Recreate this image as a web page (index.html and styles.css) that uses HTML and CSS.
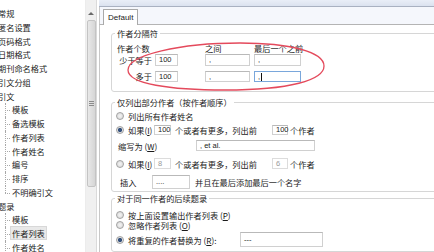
FILE: index.html
```html
<!DOCTYPE html>
<html>
<head>
<meta charset="utf-8">
<meta name="viewport" content="width=device-width">
<link rel="stylesheet" href="styles.css">
</head>
<body>

<div class="app">
  <div class="tree">
    <div class="node top">常规</div>
    <div class="node top">匿名设置</div>
    <div class="node top">页码格式</div>
    <div class="node top">日期格式</div>
    <div class="node top">期刊命名格式</div>
    <div class="node top">引文分组</div>
    <div class="node top">引文</div>
    <div class="node child"><span class="label">模板</span></div>
    <div class="node child"><span class="label">备选模板</span></div>
    <div class="node child"><span class="label">作者列表</span></div>
    <div class="node child"><span class="label">作者姓名</span></div>
    <div class="node child"><span class="label">编号</span></div>
    <div class="node child"><span class="label">排序</span></div>
    <div class="node child last"><span class="label">不明确引文</span></div>
    <div class="node top">题录</div>
    <div class="node child"><span class="label">模板</span></div>
    <div class="node child selected"><span class="label">作者列表</span></div>
    <div class="node child"><span class="label">作者姓名</span></div>
  </div>

  <div class="scrollbar">
    <div class="arrow"></div>
    <div class="thumb"><span class="grip"></span></div>
  </div>
  <div class="spacer"></div>

  <div class="main">
    <div class="strip"></div>
    <div class="tabbar"><div class="tab">Default</div></div>

    <div class="panel">
      <!-- author separators -->
      <fieldset class="group g1">
        <legend>作者分隔符</legend>
        <div class="sepgrid">
          <div class="head span2">作者个数</div>
          <div class="head">之间</div>
          <div class="head">最后一个之前</div>

          <div class="lbl">少于等于</div>
          <div><span class="field w23">100</span></div>
          <div><span class="field w45">,</span></div>
          <div><span class="field w47">,</span></div>

          <div class="lbl low">多于</div>
          <div class="low"><span class="field w23">100</span></div>
          <div class="low"><span class="field w45">,</span></div>
          <div class="low"><span class="field w47 focus">,<span class="caret"></span></span></div>
        </div>
      </fieldset>

      <!-- abbreviated author list -->
      <fieldset class="group g2">
        <legend>仅列出部分作者（按作者顺序）</legend>
        <div class="row r1">
          <span class="opt"><span class="radio"></span>列出所有作者姓名</span>
        </div>
        <div class="row r2">
          <span class="opt w38"><span class="radio on"></span>如果(<u>I</u>)</span>
          <span class="field w17">100</span>
          <span class="txt">个或者有更多，列出前</span>
          <span class="field w16">100</span>
          <span class="tail">个作者</span>
        </div>
        <div class="row r3">
          <span class="abbr">缩写为 (<u>W</u>)</span>
          <span class="field w119">, et al.</span>
        </div>
        <div class="row r4">
          <span class="opt w38"><span class="radio"></span>如果(<u>I</u>)</span>
          <span class="field w17 off">8</span>
          <span class="txt">个或者有更多，列出前</span>
          <span class="field w16 off">6</span>
          <span class="tail">个作者</span>
        </div>
        <div class="row r5">
          <span class="insert">插入</span>
          <span class="field w38f">....</span>
          <span class="after">并且在最后添加最后一个名字</span>
        </div>
      </fieldset>

      <!-- repeated authors -->
      <fieldset class="group g3">
        <legend>对于同一作者的后续题录</legend>
        <div class="row s1">
          <span class="opt"><span class="radio"></span>按上面设置输出作者列表 (<u>P</u>)</span>
        </div>
        <div class="row s2">
          <span class="opt"><span class="radio"></span>忽略作者列表 (<u>O</u>)</span>
        </div>
        <div class="row s3">
          <span class="opt w124"><span class="radio on"></span>将重复的作者替换为 (<u>R</u>):</span>
          <span class="field w83">---</span>
        </div>
      </fieldset>
    </div>
  </div>
</div>

<svg class="mark" width="434" height="252" viewBox="0 0 434 252">
  <path d="M128,70 C128,55 180,43 240,43 C290,43 324,52 324,66 C324,80 290,90 225,90 C170,90 128,84 128,70 Z"
        fill="none" stroke="#e44a5c" stroke-width="1.3"/>
</svg>

</body>
</html>
```

FILE: styles.css
```css
* {
  box-sizing: border-box;
}

html, body {
  margin: 0;
}

body {
  position: relative;
  width: 434px;
  height: 252px;
  overflow: hidden;
  font-family: "Noto Sans CJK SC", "Noto Sans", sans-serif;
  font-size: 8.2px;
  color: #1b1b1b;
  background: #fff;
}

.app {
  display: flex;
  height: 252px;
}

/* left tree */
.tree {
  flex: none;
  width: 85px;
  padding-top: 7px;
  overflow: hidden;
}

.node {
  position: relative;
  height: 13.76px;
  line-height: 13.76px;
  white-space: nowrap;
}

.node.top {
  margin-left: -2px;
}

.node.child .label {
  margin-left: 10px;
  padding: 0 1px;
  border: 1px solid transparent;
}

.node.child.selected .label {
  background: #e9e9e9;
  border-color: #d8d8d8;
}

.node.child::before {
  content: "";
  position: absolute;
  left: 5px;
  top: 50%;
  width: 5px;
  border-top: 1px dotted #a8a8a8;
}

.node.child::after {
  content: "";
  position: absolute;
  left: 5px;
  top: 0;
  bottom: 0;
  border-left: 1px dotted #a8a8a8;
}

.node.child.last::after {
  bottom: 50%;
}

/* scrollbar */
.scrollbar {
  flex: none;
  width: 12px;
  background: #f0f0f0;
  border-left: 1px solid #ececec;
  border-right: 1px solid #dadada;
  padding-top: 12px;
  display: flex;
  flex-direction: column;
  align-items: center;
}

.arrow {
  width: 0;
  height: 0;
  border-left: 3px solid transparent;
  border-right: 3px solid transparent;
  border-bottom: 3px solid #6a6a6a;
}

.thumb {
  margin-top: 5px;
  width: 9px;
  height: 167px;
  background: linear-gradient(90deg, #e8e8e8, #d6d6d6);
  border: 1px solid #c4c4c4;
  border-radius: 2px;
  display: flex;
  align-items: center;
  justify-content: center;
}

.grip {
  width: 5px;
  height: 5px;
  background: repeating-linear-gradient(#8c8c8c 0 1px, transparent 1px 2px);
}

.spacer {
  flex: none;
  width: 2px;
}

/* right side */
.main {
  flex: 1;
  display: flex;
  flex-direction: column;
  min-width: 0;
}

.strip {
  height: 7px;
  background: linear-gradient(#e9eef7, #dbe2ef);
  border-bottom: 1px solid #a9b1c1;
}

.tabbar {
  height: 19px;
  background: #f5f7fc;
  border-left: 1px solid #c8c8c8;
  padding-left: 3px;
  display: flex;
  align-items: flex-end;
}

.tab {
  position: relative;
  z-index: 1;
  width: 35px;
  height: 16px;
  margin-bottom: -1px;
  padding-left: 4px;
  background: #fff;
  border: 1px solid #a9a9a9;
  border-bottom: none;
  border-radius: 1px 1px 0 0;
  font-family: "Liberation Sans", Arial, sans-serif;
  font-size: 8px;
  line-height: 15px;
}

.panel {
  flex: 1;
  border-top: 1px solid #b4b4b4;
  border-left: 1px solid #c8c8c8;
  padding: 3px 0 0 11px;
}

.group {
  width: 340px;
  min-width: 0;
  margin: 0;
  border: 1px solid #d6d6d6;
  border-radius: 3px;
  padding-left: 4px;
  padding-right: 0;
}

.group legend {
  margin-left: -1px;
  padding: 0 2px;
  line-height: 10px;
  color: #222;
}

.g1 {
  padding-top: 6px;
  padding-bottom: 9px;
  margin-bottom: 5px;
}

.g2 {
  padding-top: 4px;
  padding-bottom: 2px;
  margin-bottom: 1px;
}

.g3 {
  padding-top: 7px;
  padding-bottom: 4px;
}

/* separators grid */
.sepgrid {
  margin-left: 1px;
  display: grid;
  grid-template-columns: 38px 50px 49px 47px;
  grid-template-rows: 10px 12px 16px;
  line-height: 10px;
}

.head {
  align-self: start;
  line-height: 9px;
  white-space: nowrap;
}

.span2 {
  grid-column: span 2;
}

.lbl {
  text-align: right;
  padding-right: 3px;
  line-height: 12px;
}

.low {
  align-self: end;
  height: 11px;
  line-height: 11px;
}

.sepgrid > div > .field {
  height: 100%;
}

/* inputs */
.field {
  display: flex;
  align-items: center;
  flex: none;
  height: 100%;
  padding-left: 3px;
  background: #fff;
  border: 1px solid #d0d0d0;
  border-top-color: #b9b9b9;
  font-family: "Liberation Sans", Arial, sans-serif;
  font-size: 7.5px;
  line-height: 8px;
  color: #222;
  white-space: nowrap;
}

.field.focus {
  border-color: #7aa7db;
}

.field.off {
  color: #9a9a9a;
  border-color: #dcdcdc;
}

.caret {
  display: inline-block;
  width: 1px;
  height: 8px;
  margin-left: 1px;
  background: #111;
}

.w16 { width: 16px; }
.w17 { width: 17px; }
.w23 { width: 23px; }
.w38f { width: 38px; }
.w45 { width: 45px; }
.w47 { width: 47px; }
.w83 { width: 83px; }
.w119 { width: 119px; }

/* option rows */
.row {
  display: flex;
  align-items: center;
  white-space: nowrap;
  line-height: 10px;
}

.r1 { height: 10px; }
.r2 { height: 10px; margin-top: 4px; }
.r3 { height: 11px; margin-top: 5px; }
.r4 { height: 11px; margin-top: 7px; }
.r5 { height: 14px; margin-top: 6px; }

.s1 { height: 10px; }
.s2 { height: 10px; }
.s3 { height: 15px; margin-top: 2px; }

.opt {
  display: flex;
  align-items: center;
  flex: none;
}

.opt.w38 { width: 38px; }
.opt.w124 { width: 124px; }

.radio {
  flex: none;
  width: 8px;
  height: 8px;
  margin-right: 4px;
  border: 1px solid #a2a2a2;
  border-radius: 50%;
  background: radial-gradient(circle, #f4f4f4 0, #d4d4d4 100%);
}

.radio.on {
  background: radial-gradient(circle, #33507c 0 1.8px, #e4e4e4 2.4px, #cfcfcf 100%);
}

.txt {
  flex: none;
  width: 97px;
  margin-left: 4px;
}

.tail {
  margin-left: 2px;
}

.abbr {
  flex: none;
  width: 80px;
  padding-left: 2px;
}

.insert {
  flex: none;
  width: 36px;
  padding-left: 4px;
}

.after {
  margin-left: 5px;
}

u {
  text-underline-offset: 1px;
}

/* red annotation */
.mark {
  position: absolute;
  left: 0;
  top: 0;
  pointer-events: none;
}
```
